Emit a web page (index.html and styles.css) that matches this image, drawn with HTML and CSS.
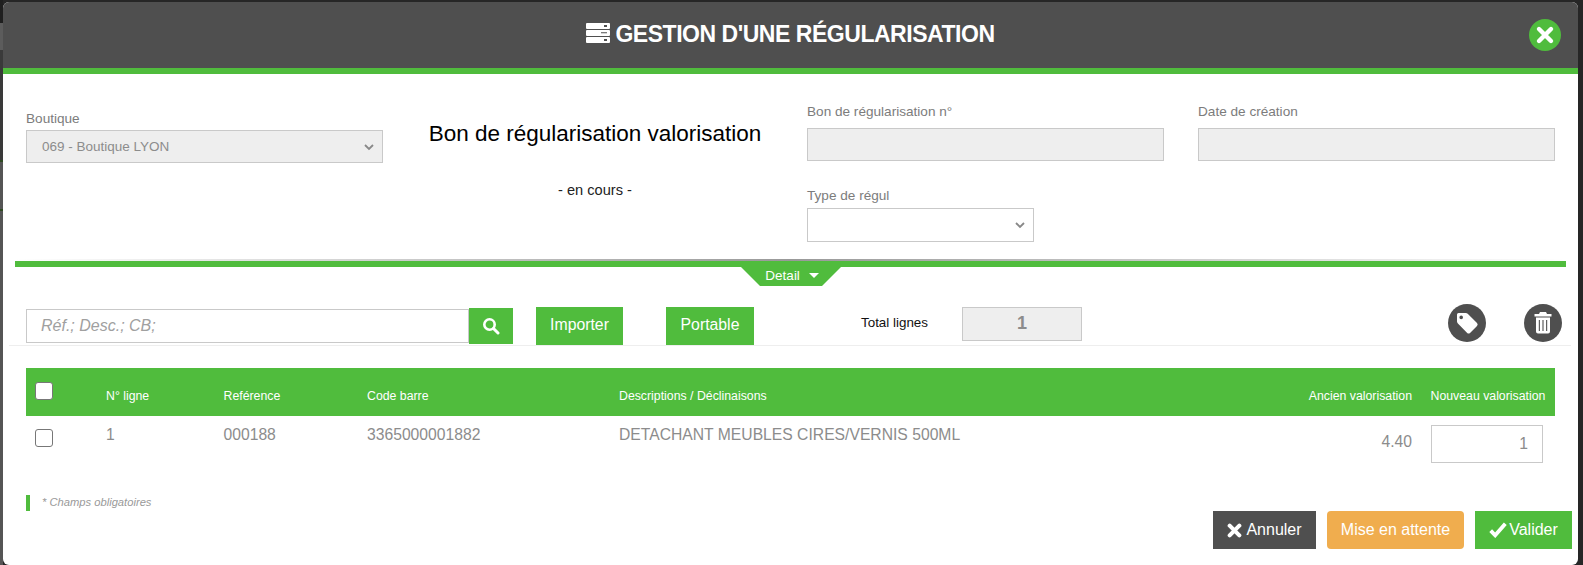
FILE: index.html
```html
<!DOCTYPE html>
<html lang="fr">
<head>
<meta charset="utf-8">
<title>Gestion d'une régularisation</title>
<link rel="stylesheet" href="styles.css">
</head>
<body>
<div class="overlay">
  <div class="modal">
    <header class="modal-head">
      <h1 class="modal-title">
        <svg class="title-icon" viewBox="0 0 24 20"><path fill="#fff" fill-rule="evenodd" d="M1 0h22a1 1 0 0 1 1 1v4a1 1 0 0 1-1 1H1a1 1 0 0 1-1-1V1a1 1 0 0 1 1-1zm17 2v2h3V2zM1 7h22a1 1 0 0 1 1 1v4a1 1 0 0 1-1 1H1a1 1 0 0 1-1-1V8a1 1 0 0 1 1-1zm14 2.200v1h6v-1zM1 14h22a1 1 0 0 1 1 1v4a1 1 0 0 1-1 1H1a1 1 0 0 1-1-1v-4a1 1 0 0 1 1-1zm17 2v2h3v-2z"/></svg>
        GESTION D'UNE RÉGULARISATION
      </h1>
      <button class="close-btn" type="button" aria-label="Fermer">
        <svg viewBox="0 0 32 32"><path d="M10 10l12 12M22 10L10 22" stroke="#fff" stroke-width="4.400" stroke-linecap="round" fill="none"/></svg>
      </button>
    </header>

    <section class="form-top">
      <div class="col-shop">
        <label class="field-label">Boutique</label>
        <div class="select is-disabled"><span>069 - Boutique LYON</span>
          <svg class="chev" viewBox="0 0 12 8"><path d="M2 2l4 4 4-4" stroke="#888" stroke-width="1.800" fill="none"/></svg>
        </div>
      </div>
      <div class="col-title">
        <h2 class="doc-title">Bon de régularisation valorisation</h2>
        <p class="doc-status">- en cours -</p>
      </div>
      <div class="col-fields">
        <div class="field">
          <label class="field-label">Bon de régularisation n°</label>
          <div class="text-box is-disabled"></div>
        </div>
        <div class="field">
          <label class="field-label">Date de création</label>
          <div class="text-box is-disabled"></div>
        </div>
        <div class="field field-type">
          <label class="field-label">Type de régul</label>
          <div class="select select-type">
            <svg class="chev" viewBox="0 0 12 8"><path d="M2 2l4 4 4-4" stroke="#888" stroke-width="1.800" fill="none"/></svg>
          </div>
        </div>
      </div>
    </section>

    <div class="divider">
      <div class="detail-tab">Detail <span class="caret"></span></div>
    </div>

    <section class="toolbar">
      <div class="search">
        <div class="search-input">Réf.; Desc.; CB;</div>
        <button class="search-btn" type="button" aria-label="Rechercher">
          <svg viewBox="0 0 18 18"><circle cx="7.500" cy="7.500" r="5.200" stroke="#fff" stroke-width="2.600" fill="none"/><path d="M11.500 11.500l4.500 4.500" stroke="#fff" stroke-width="3" stroke-linecap="round"/></svg>
        </button>
      </div>
      <button class="btn btn-import" type="button">Importer</button>
      <button class="btn btn-portable" type="button">Portable</button>
      <span class="total-label">Total lignes</span>
      <div class="total-box">1</div>
      <button class="round-btn round-tag" type="button" aria-label="Étiquette">
        <svg viewBox="0 0 38 38"><path fill="#fff" fill-rule="evenodd" d="M10.500 9h7.200c.8 0 1.500.3 2 .8l9.300 9.300a2 2 0 0 1 0 2.800l-7 7a2 2 0 0 1-2.800 0l-9.300-9.300c-.5-.5-.9-1.200-.9-2v-7.100A1.500 1.500 0 0 1 10.500 9zm2.700 2.600a1.800 1.800 0 1 0 0 3.600 1.800 1.800 0 0 0 0-3.600z"/></svg>
      </button>
      <button class="round-btn" type="button" aria-label="Supprimer">
        <svg viewBox="0 0 38 38"><path fill="#fff" fill-rule="evenodd" d="M16 8h6l1 2h4.500v2.500h-17V10H15zM12 13.500h14V27.500a2 2 0 0 1-2 2H14a2 2 0 0 1-2-2zM14.800 16v11h1.100V16zM18.450 16v11h1.100V16zM22.100 16v11h1.100V16z"/></svg>
      </button>
    </section>

    <table class="lines">
      <colgroup>
        <col class="c-check"><col class="c-num"><col class="c-ref"><col class="c-code"><col class="c-desc"><col class="c-old"><col class="c-new">
      </colgroup>
      <thead>
        <tr>
          <th><span class="check check-head"></span></th>
          <th>N° ligne</th>
          <th>Reférence</th>
          <th>Code barre</th>
          <th>Descriptions / Déclinaisons</th>
          <th class="right">Ancien valorisation</th>
          <th class="th-new">Nouveau valorisation</th>
        </tr>
      </thead>
      <tbody>
        <tr>
          <td><span class="check"></span></td>
          <td>1</td>
          <td>000188</td>
          <td>3365000001882</td>
          <td>DETACHANT MEUBLES CIRES/VERNIS 500ML</td>
          <td class="right td-old">4.40</td>
          <td class="td-new"><div class="qty">1</div></td>
        </tr>
      </tbody>
    </table>

    <footer class="modal-foot">
      <p class="required">* Champs obligatoires</p>
      <div class="actions">
        <button class="act act-cancel" type="button">
          <svg viewBox="0 0 14 14"><path d="M2.500 2.500l9 9M11.500 2.500l-9 9" stroke="#fff" stroke-width="3.800" stroke-linecap="round" fill="none"/></svg>
          Annuler</button>
        <button class="act act-wait" type="button">Mise en attente</button>
        <button class="act act-ok" type="button">
          <svg viewBox="0 0 16 14"><path d="M1.500 7.500l4 4.200L14.500 1.500" stroke="#fff" stroke-width="3.400" fill="none"/></svg>
          Valider</button>
      </div>
    </footer>
  </div>
</div>
</body>
</html>
```

FILE: styles.css
```css
* { box-sizing: border-box; }
html, body { margin: 0; height: 100%; }
body {
  font-family: "Liberation Sans", Arial, sans-serif;
  background: #2b2b2b;
  overflow: hidden;
}
h1, h2, p { margin: 0; }
button { font-family: inherit; border: 0; padding: 0; cursor: pointer; }

.overlay {
  height: 565px;
  padding: 2px 5px 0 3px;
  background:
    linear-gradient(#1f1f1f 0 23px, #5c5c5c 23px 50px, #3a3a3a 50px 160px, #2e4a22 160px 162px, #555 162px 209px, #2e4a22 209px 211px, #555 211px) left top / 3px 100% no-repeat,
    #262626;
}
.modal {
  height: 563px;
  background: #fff;
  border-radius: 6px;
  overflow: hidden;
  display: flex;
  flex-direction: column;
}

.modal-head {
  height: 72px;
  flex: none;
  background: #4f4f4f;
  border-bottom: 6px solid #50bc3d;
  display: flex;
  align-items: center;
  justify-content: center;
  padding-bottom: 2px;
  position: relative;
}
.modal-title {
  display: flex;
  align-items: center;
  gap: 5px;
  color: #fff;
  font-size: 23px;
  font-weight: 700;
  letter-spacing: -0.47px;
}
.title-icon { width: 24px; height: 20px; margin-top: -3px; }
.close-btn {
  position: absolute;
  top: 17px;
  right: 17px;
  width: 32px;
  height: 32px;
  border-radius: 50%;
  background: #50bc3d;
}
.close-btn svg { display: block; width: 32px; height: 32px; }

.form-top {
  height: 185px;
  flex: none;
  padding-left: 23px;
  display: grid;
  grid-template-columns: 357px 424px 748px;
}
.field-label {
  display: block;
  font-size: 13.600px;
  line-height: 20px;
  color: #7c7c7c;
}
.col-shop { padding-top: 35px; }
.col-shop .field-label { margin-bottom: 1px; }
.select, .text-box {
  border: 1px solid #c9c9c9;
  height: 33px;
  display: flex;
  align-items: center;
  justify-content: space-between;
  font-size: 13.500px;
  color: #8c8c8c;
}
.select { padding: 0 7px 0 15px; }
.is-disabled { background: #eeeeee; }
.chev { width: 12px; height: 8px; margin-left: auto; }
.col-title { text-align: center; padding-top: 46px; }
.doc-title {
  font-size: 22.500px;
  line-height: 28px;
  font-weight: 400;
  color: #000;
}
.doc-status {
  margin-top: 32px;
  font-size: 14.600px;
  line-height: 20px;
  color: #222;
}
.col-fields {
  padding-top: 28px;
  display: grid;
  grid-template-columns: 357px 357px;
  column-gap: 34px;
  align-content: start;
}
.field .field-label { margin-bottom: 6px; }
.field-type { margin-top: 25px; }
.field-type .field-label { margin-bottom: 2px; }
.select-type { width: 227px; height: 34px; justify-content: flex-end; }

.divider {
  flex: none;
  height: 8px;
  margin-left: 12px;
  margin-right: 12px;
  border-bottom: 6px solid #50bc3d;
  background: linear-gradient(to right, #fff 0%, #999 50%, #fff 100%) top / 100% 2px no-repeat;
  position: relative;
}
.detail-tab {
  position: absolute;
  top: 8px;
  left: 726px;
  width: 100px;
  height: 19px;
  background: #50bc3d;
  color: #fff;
  font-size: 13.500px;
  line-height: 17px;
  text-align: center;
  clip-path: polygon(0 0, 100% 0, 81% 100%, 19% 100%);
  padding-left: 2px;
}
.caret {
  display: inline-block;
  margin-left: 5px;
  vertical-align: 2px;
  border-left: 5px solid transparent;
  border-right: 5px solid transparent;
  border-top: 5px solid #fff;
}

.toolbar {
  flex: none;
  height: 79px;
  margin: 0 7px 0 6px;
  padding: 40px 0 0 17px;
  border-bottom: 1px solid #eeeeee;
  position: relative;
  display: flex;
  align-items: flex-start;
}
.search { display: flex; align-items: center; width: 510px; margin-top: 1px; }
.search-input {
  width: 443px;
  height: 34px;
  border: 1px solid #c9c9c9;
  padding-left: 14px;
  font-size: 16px;
  line-height: 32px;
  font-style: italic;
  color: #a0a0a0;
}
.search-btn {
  width: 44px;
  height: 36px;
  background: #50bc3d;
  display: flex;
  align-items: center;
  justify-content: center;
}
.search-btn svg { width: 18px; height: 18px; }
.btn {
  height: 38px;
  background: #50bc3d;
  color: #fff;
  font-size: 15.800px;
  padding-bottom: 3px;
}
.btn-import { width: 87px; }
.btn-portable { width: 88px; margin-left: 43px; }
.total-label {
  margin-left: 107px;
  width: 101px;
  font-size: 13.400px;
  line-height: 32px;
  color: #111;
}
.total-box {
  width: 120px;
  height: 34px;
  background: #eeeeee;
  border: 1px solid #c9c9c9;
  text-align: center;
  font-size: 18px;
  font-weight: 700;
  line-height: 30px;
  color: #8c8c8c;
}
.round-btn {
  width: 38px;
  height: 38px;
  border-radius: 50%;
  background: #4f4f4f;
  margin-top: -3px;
  margin-left: 38px;
}
.round-btn svg { display: block; width: 38px; height: 38px; }
.round-tag { margin-left: 366px; }

.lines {
  flex: none;
  width: 1529px;
  margin: 22px 0 0 23px;
  border-collapse: collapse;
  table-layout: fixed;
}
.c-check { width: 80px; }
.c-num { width: 117.500px; }
.c-ref { width: 143.500px; }
.c-code { width: 252px; }
.c-desc { width: 600px; }
.c-old { width: 193px; }
.c-new { width: 143px; }
.lines th {
  height: 48px;
  background: #50bc3d;
  color: #fff;
  font-size: 12.300px;
  font-weight: 400;
  text-align: left;
  vertical-align: top;
  padding: 21px 0 0;
}
.lines td {
  height: 62px;
  font-size: 15.700px;
  line-height: 20px;
  color: #8c8c8c;
  vertical-align: top;
  padding: 9px 0 0;
}
.lines .right { text-align: right; }
.lines .th-new { padding-left: 18.500px; white-space: nowrap; }
.lines .td-old { padding-top: 16px; }
.lines .td-new { padding: 9px 0 0 19px; }
.check {
  display: block;
  width: 18px;
  height: 18px;
  margin-left: 9px;
  background: #fff;
  border: 1px solid #777;
  border-radius: 3px;
}
.lines th .check-head { margin-top: -7px; }
.lines td .check { margin-top: 4px; }
.qty {
  width: 112px;
  height: 38px;
  border: 1px solid #c9c9c9;
  text-align: right;
  padding-right: 14px;
  line-height: 36px;
}

.modal-foot {
  flex: 1;
  padding: 17px 6px 0 23px;
  position: relative;
}
.required {
  height: 16px;
  border-left: 4px solid #50bc3d;
  padding-left: 12px;
  font-size: 11.200px;
  line-height: 15px;
  font-style: italic;
  color: #999;
}
.actions {
  display: flex;
  justify-content: flex-end;
  gap: 11px;
}
.act {
  height: 38px;
  color: #fff;
  font-size: 16px;
  display: flex;
  align-items: center;
  justify-content: center;
  gap: 4px;
}
.act svg { width: 15px; height: 15px; }
.act-cancel { width: 103px; background: #4f4f4f; }
.act-wait { width: 137px; background: #f0ad4e; border-radius: 4px; }
.act-ok { width: 97px; background: #50bc3d; gap: 2px; }
.act-ok svg { width: 18px; height: 16px; }
```
